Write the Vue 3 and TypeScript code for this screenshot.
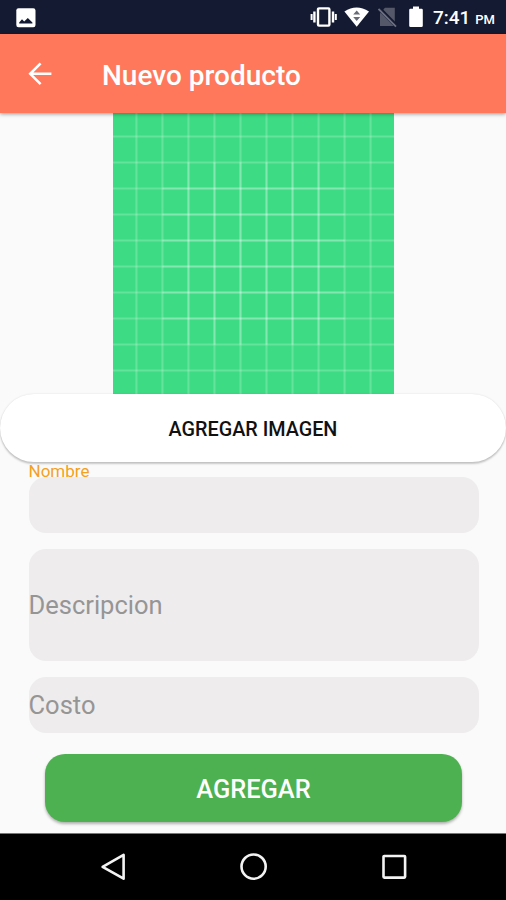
<script setup lang="ts">
import { ref } from 'vue'

const outer: number[] = [9, 19, 29, 39, 49, 59, 69, 79, 89, 99]
const inner: number[] = [29, 39, 49, 59, 69, 79]

const nombre = ref('')
const descripcion = ref('')
const costo = ref('')
</script>

<template>
  <div class="screen">
    <header class="status">
      <svg class="photo" width="20" height="20" viewBox="0 0 20 20">
        <rect x="0.3" y="0.2" width="19.2" height="19" rx="2.2" fill="#fff" />
        <path d="M3.2 15.5V14.6L6 11.2 8.2 13.4 11.8 10 16.4 14.6V15.5Z" fill="#141a31" />
      </svg>
      <div class="indicators">
        <svg width="28" height="20" viewBox="0 0 28 20">
          <rect x="9" y="1.4" width="11.4" height="17.2" rx="1" fill="none" stroke="#fff" stroke-width="2.4" />
          <path d="M5.4 4.5v11M24 4.5v11" stroke="#fff" stroke-width="2.4" />
          <path d="M2.6 7v6M26.8 7v6" stroke="#fff" stroke-width="2" />
        </svg>
        <svg class="wifi" width="26" height="20" viewBox="0 0 26 20">
          <path d="M0.4 4.5Q12.5-3.7 25 4.5L12.7 19.8Z" fill="#fff" />
          <path d="M12.7 3.6 16.2 7.5H9.2ZM9.2 10H16.2L12.7 14Z" fill="#676a77" />
        </svg>
        <svg class="sim" width="20" height="22" viewBox="0 0 20 22">
          <path d="M2 7.2 7 1.8H16.8V20H2Z" fill="#545868" />
          <path d="M1 2.2 18.8 20.4" stroke="#141a31" stroke-width="4" />
          <path d="M0.5 3 18 20.7" stroke="#6c7080" stroke-width="1.8" />
        </svg>
        <svg class="battery" width="14" height="22" viewBox="0 0 14 22">
          <path d="M4 0.4h6v2.3h2.6q1.2 0 1.2 1.2v15.8q0 1.4-1.4 1.4H1.6q-1.4 0-1.4-1.4V3.9q0-1.2 1.2-1.2H4Z" fill="#fff" />
        </svg>
        <span class="clock">7:41 <small>PM</small></span>
      </div>
    </header>

    <div class="appbar">
      <svg width="24" height="24" viewBox="0 0 24 24" fill="none" stroke="#fff" stroke-width="2.6">
        <path d="M23.4 11.8H2.4M12.6 1.4 2.2 11.8l10.4 10.4" />
      </svg>
      <h1>Nuevo producto</h1>
    </div>

    <main class="content">
      <svg class="preview" width="281" height="281" viewBox="0 0 108 108">
        <path d="M0 0h108v108H0z" fill="#3ddc84" />
        <g stroke="#fff" stroke-opacity="0.2" stroke-width="0.8">
          <path v-for="p in outer" :key="'v' + p" :d="`M${p} 0V108`" />
          <path v-for="p in outer" :key="'h' + p" :d="`M0 ${p}H108`" />
          <path v-for="p in inner" :key="'iv' + p" :d="`M${p} 19V89`" />
          <path v-for="p in inner" :key="'ih' + p" :d="`M19 ${p}H89`" />
        </g>
      </svg>
      <button class="pick" type="button"><span>AGREGAR IMAGEN</span></button>
      <form class="form" @submit.prevent>
        <label class="caption" for="nombre">Nombre</label>
        <input id="nombre" v-model="nombre" class="field" type="text" />
        <input v-model="descripcion" class="field tall" type="text" placeholder="Descripcion" />
        <input v-model="costo" class="field" type="text" placeholder="Costo" />
        <button class="submit" type="submit"><span>AGREGAR</span></button>
      </form>
    </main>

    <nav class="navbar">
      <svg width="28" height="28" viewBox="0 0 28 28">
        <path d="M24.6 1.9V25.7L3.6 13.8Z" />
      </svg>
      <svg width="28" height="28" viewBox="0 0 28 28">
        <circle cx="14.6" cy="13.6" r="12.1" />
      </svg>
      <svg width="28" height="28" viewBox="0 0 28 28">
        <rect x="4.5" y="3" width="21.6" height="21.6" rx="0.8" />
      </svg>
    </nav>
  </div>
</template>

<style>
body {
  margin: 0;
}
</style>

<style scoped>
.screen {
  display: flex;
  flex-direction: column;
  width: 506px;
  height: 900px;
  overflow: hidden;
  background: #fafafa;
  font-family: Roboto, sans-serif;
}
svg {
  display: block;
  flex: none;
}
.status {
  display: flex;
  justify-content: space-between;
  box-sizing: border-box;
  height: 34px;
  flex: none;
  padding: 0 10px 0 16px;
  background: #141a31;
}
.photo {
  margin-top: 8px;
}
.indicators {
  display: flex;
  align-items: center;
  color: #fff;
}
.wifi {
  margin-left: 7px;
}
.sim {
  margin-left: 8px;
}
.battery {
  margin-left: 11px;
}
.clock {
  margin-left: 10px;
  width: 63px;
  padding-top: 3px;
  font-size: 19px;
  line-height: 24px;
  font-weight: 500;
  white-space: nowrap;
}
.clock small {
  font-size: 13px;
}
.appbar {
  position: relative;
  z-index: 1;
  display: flex;
  align-items: center;
  box-sizing: border-box;
  height: 79px;
  flex: none;
  padding-left: 28px;
  background: #ff785b;
  box-shadow: 0 1px 4px rgba(0, 0, 0, 0.4);
}
h1 {
  margin: 4px 0 0 50px;
  color: #fff;
  font-size: 28px;
  line-height: 32px;
  font-weight: 500;
}
.content {
  display: flex;
  flex-direction: column;
  align-items: center;
  flex: 1;
  min-height: 0;
}
button {
  border: 0;
  padding: 0;
  font-family: inherit;
  font-weight: 500;
}
.pick {
  width: 506px;
  height: 68px;
  flex: none;
  padding-top: 2px;
  border-radius: 34px;
  background: #fff;
  color: #111;
  font-size: 19.8px;
  box-shadow: 0 2px 2px rgba(0, 0, 0, 0.2), 0 0 2px rgba(0, 0, 0, 0.12);
}
.form {
  display: flex;
  flex-direction: column;
  width: 450px;
  margin-left: 1px;
}
.caption {
  height: 15px;
  color: #f5a01e;
  font-size: 17px;
  line-height: 19px;
}
.field {
  box-sizing: border-box;
  width: 450px;
  height: 56px;
  margin: 0 0 16px;
  padding: 0;
  border: 0;
  border-radius: 17px;
  outline: 0;
  background: #eeeced;
  color: #222;
  font-family: inherit;
  font-size: 25.5px;
}
.field::placeholder {
  color: #969596;
  opacity: 1;
}
.tall {
  height: 112px;
}
.submit {
  align-self: center;
  width: 417px;
  height: 68px;
  margin-top: 5px;
  padding-top: 2px;
  border-radius: 20px;
  background: #4eb151;
  color: #fff;
  font-size: 25.4px;
  box-shadow: 0 2px 3px rgba(0, 0, 0, 0.3);
}
.navbar {
  display: flex;
  justify-content: center;
  align-items: center;
  gap: 112px;
  box-sizing: border-box;
  height: 67px;
  flex: none;
  border-top: 1px solid #777;
  background: #000;
}
.navbar svg {
  fill: none;
  stroke: #f3f3f3;
  stroke-width: 2.6;
  stroke-linejoin: round;
}
</style>
